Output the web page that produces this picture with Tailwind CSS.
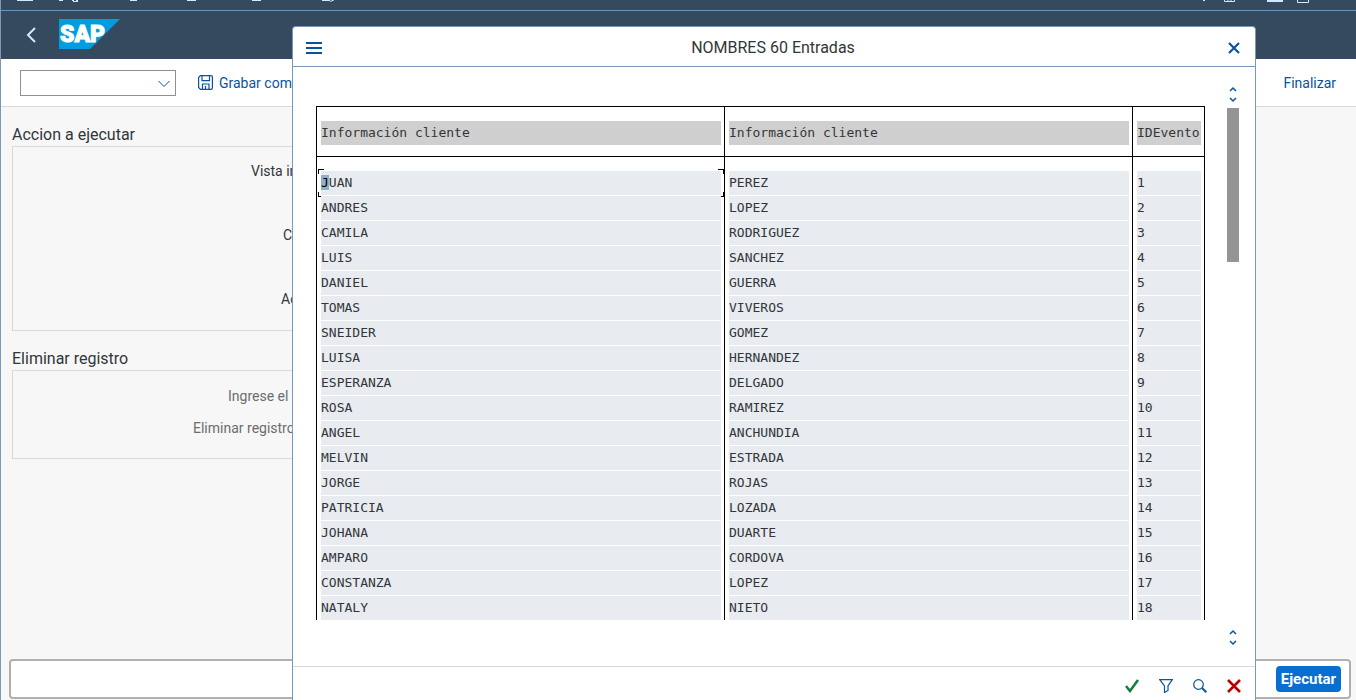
<!DOCTYPE html>
<html lang="es">
<head>
<meta charset="utf-8">
<meta name="viewport" content="width=device-width, initial-scale=1">
<title>NOMBRES 60 Entradas</title>
<script src="https://cdn.jsdelivr.net/npm/@tailwindcss/browser@4"></script>
</head>
<body class="relative flex h-screen flex-col overflow-hidden border-l border-[#7a98b8] bg-[#f7f7f7] font-['Roboto','Liberation_Sans',sans-serif] text-sm text-[#32363a]">
  <div class="flex h-[11px] shrink-0 items-start justify-between border-b border-[#6f92b8] bg-[#354a5f] text-[#d1e8ff]">
    <svg class="h-[3px] w-[340px]" viewBox="0 0 340 3" fill="none" stroke="currentColor" aria-hidden="true"><path d="M16 .5h16M58 .5h4M71 .5h2M75 .5h2M72 1.500h5M129 .5h7M186 .5h9M251 .5h9M321 .5h8M329 1.500l4-1.500"/></svg>
    <svg class="h-[3px] w-[166px]" viewBox="0 0 166 3" fill="none" stroke="currentColor" aria-hidden="true"><path d="M13 .5h2M34.500 0v1.500h10V0M38 0v1M41 0v1M77 .5h16M77 1.500h16M107.500 0v2.500h11V0"/></svg>
  </div>
  <header class="flex h-12 shrink-0 items-start bg-[#354a5f] pt-2 pl-5">
    <button class="flex h-8 w-5 items-center justify-center" aria-label="Atrás"><svg class="h-4 w-3" viewBox="0 0 12 16" fill="none" stroke="#d1e8ff" stroke-width="2"><path d="M10 1 3 8l7 7"/></svg></button>
    <svg class="ml-[18px] h-[30px] w-[61px]" viewBox="0 0 61 30" role="img" aria-label="SAP"><path d="M0 0h61L31 30H0z" fill="#009de0"/><text x="1" y="23" font-family="Roboto" font-weight="900" font-size="23" fill="#fff" stroke="#fff" stroke-width="1">SAP</text></svg>
  </header>
  <div class="flex h-12 shrink-0 items-center border-b border-[#d9d9d9] bg-white pr-5 pl-[19px] text-[#0854a0]">
    <div class="relative">
      <select class="block h-[26px] w-[156px] appearance-none border border-[#89919a] bg-white" aria-label="Comando"><option></option></select>
      <svg class="pointer-events-none absolute top-2.5 right-1.5 h-2 w-3" viewBox="0 0 12 8" fill="none" stroke="currentColor"><path d="m.5 1 5.500 5.500L11.500 1"/></svg>
    </div>
    <button class="ml-[22px] flex items-center gap-1.5"><svg class="h-[15px] w-[15px]" viewBox="0 0 15 15" fill="none" stroke="currentColor" stroke-width="1.200"><path d="M2.500.6h10.500q1.400 0 1.400 1.400v11q0 1.400-1.400 1.400H2.500L.6 12.500V2.500zM4 .6v5h7.500v-5M4.500 14.400V9h6.500v5.400M7.500 11v3.400"/></svg>Grabar como</button>
    <button class="ml-auto">Finalizar</button>
  </div>
  <main class="grow pr-[110px] pl-[11px] pt-[18px]">
    <section>
      <h2 class="text-base leading-5">Accion a ejecutar</h2>
      <div class="mt-px grid h-[185px] auto-rows-[32px] border border-[#d9d9d9] pt-2 leading-8">
        <span class="pl-[238px]">Vista in</span><span class="row-start-3 pl-[270px]">C</span><span class="row-start-5 pl-[268px]">Ac</span>
      </div>
    </section>
    <section class="mt-[18px]">
      <h2 class="text-base leading-5">Eliminar registro</h2>
      <div class="mt-px grid h-[89px] auto-rows-[32px] border border-[#d9d9d9] pt-[9px] leading-8 text-[#6a6d70]">
        <span class="pl-[215px]">Ingrese el</span><span class="pl-[180px]">Eliminar registros</span>
      </div>
    </section>
  </main>
  <footer class="mr-[5px] mb-px ml-2 flex h-10 shrink-0 items-center justify-end rounded border-2 border-[#b0b0b0] bg-white pr-2">
    <button class="h-[26px] rounded bg-[#0a6ed1] px-[5px] pt-px text-[15px] font-bold text-white">Ejecutar</button>
  </footer>

  <div role="dialog" aria-labelledby="title" class="absolute top-[26px] right-[100px] bottom-0 left-[291px] flex flex-col rounded-t border border-b-0 border-[#7a98b8] bg-white">
    <div class="flex h-10 shrink-0 items-center justify-between border-b border-[#7a98b8] pt-0.5 pr-[11px] pl-[13px] text-[#0854a0]">
      <button aria-label="Menú"><svg class="h-4 w-4" viewBox="0 0 16 16" stroke="currentColor" stroke-width="2"><path d="M0 3h16M0 8h16M0 13h16"/></svg></button>
      <h1 id="title" class="text-base text-[#32363a]">NOMBRES 60 Entradas</h1>
      <button class="pl-1" aria-label="Cerrar"><svg class="mr-1 h-3 w-3" viewBox="0 0 12 12" stroke="currentColor" stroke-width="2.200"><path d="m1 1 10 10M11 1 1 11"/></svg></button>
    </div>
    <div class="flex min-h-0 grow pt-[19px] pr-2.5 pb-5 pl-[23px]">
      <div class="mt-5 mb-[26px] min-w-0 grow overflow-hidden">
        <table class="w-full table-fixed border-collapse border border-black text-left font-['DejaVu_Sans_Mono',monospace] text-[13px]">
          <colgroup><col><col><col class="w-[72px]"></colgroup>
          <thead><tr class="h-[50px] border-b border-black">
            <th class="border-r border-black pt-0.5 pr-[3px] pl-1 font-normal"><div class="h-6 bg-[#cfcfcf] leading-6">Información cliente</div></th>
            <th class="border-r border-black pt-0.5 pr-[3px] pl-1 font-normal"><div class="h-6 bg-[#cfcfcf] leading-6">Información cliente</div></th>
            <th class="pt-0.5 pr-[3px] pl-1 font-normal"><div class="h-6 bg-[#cfcfcf] leading-6">IDEvento</div></th>
          </tr></thead>
          <tbody id="rows"></tbody>
        </table>
      </div>
      <div class="ml-4 flex w-[24px] shrink-0 flex-col items-center text-[#0854a0]">
        <svg class="h-[18px] w-2" viewBox="0 0 8 18" fill="none" stroke="currentColor" stroke-width="1.500"><path d="m1 5 3-3 3 3M1 12l3 3 3-3"/></svg>
        <div class="mt-1 h-[154px] w-3 bg-[#949494]"></div>
        <svg class="mt-auto h-[18px] w-2" viewBox="0 0 8 18" fill="none" stroke="currentColor" stroke-width="1.500"><path d="m1 6 3-3 3 3M1 13l3 3 3-3"/></svg>
      </div>
    </div>
    <div class="flex h-[34px] shrink-0 items-center justify-end gap-5 border-t border-[#d9d9d9] pt-1 pr-3.5 text-[#0854a0]">
      <button aria-label="Aceptar"><svg class="h-3.5 w-3.5" viewBox="0 0 14 14" fill="none" stroke="#107e3e" stroke-width="2.500"><path d="m1 7 4 5 8-11"/></svg></button>
      <button aria-label="Filtrar"><svg class="h-3.5 w-3.5" viewBox="0 0 14 14" fill="none" stroke="currentColor" stroke-width="1.200"><path d="M.7.6h12.600L9 7v4.500l-3.500 2V7z"/></svg></button>
      <button aria-label="Buscar"><svg class="h-3.5 w-3.5" viewBox="0 0 14 14" fill="none" stroke="currentColor" stroke-width="1.200"><circle cx="5.500" cy="5.500" r="4.800"/><path stroke-width="2" d="m9 9 4.300 4.300"/></svg></button>
      <button aria-label="Cancelar"><svg class="h-3.5 w-3.5" viewBox="0 0 14 14" stroke="#b00" stroke-width="2.600"><path d="m1 1 12 12M13 1 1 13"/></svg></button>
    </div>
  </div>
  <script>
    const data = [["JUAN","PEREZ"],["ANDRES","LOPEZ"],["CAMILA","RODRIGUEZ"],["LUIS","SANCHEZ"],["DANIEL","GUERRA"],["TOMAS","VIVEROS"],["SNEIDER","GOMEZ"],["LUISA","HERNANDEZ"],["ESPERANZA","DELGADO"],["ROSA","RAMIREZ"],["ANGEL","ANCHUNDIA"],["MELVIN","ESTRADA"],["JORGE","ROJAS"],["PATRICIA","LOZADA"],["JOHANA","DUARTE"],["AMPARO","CORDOVA"],["CONSTANZA","LOPEZ"],["NATALY","NIETO"]];
    const focus = '<span class="absolute -top-0.5 -left-[3px] h-[5px] w-1.5 border-t border-l border-black"></span><span class="absolute -bottom-0.5 -left-[3px] h-[5px] w-1.5 border-b border-l border-black"></span><span class="absolute -top-0.5 -right-[3px] h-[5px] w-1.5 border-t border-r border-black"></span><span class="absolute -right-[3px] -bottom-0.5 h-[5px] w-1.5 border-r border-b border-black"></span>';
    const cell = (t, i) => `<td class="border-r border-black p-0 pr-[3px] pl-1 align-bottom${i ? '' : ' pt-3.5'}"><div class="relative mb-px h-6 bg-[#e8ebf0] leading-6">${t}</div></td>`;
    document.getElementById('rows').innerHTML = data.map((r, i) =>
      `<tr>${cell(i ? r[0] : '<span class="bg-[#91afd0] text-black">J</span>UAN' + focus, i)}${cell(r[1], i)}${cell(i + 1, i)}</tr>`).join('');
  </script>
</body>
</html>
